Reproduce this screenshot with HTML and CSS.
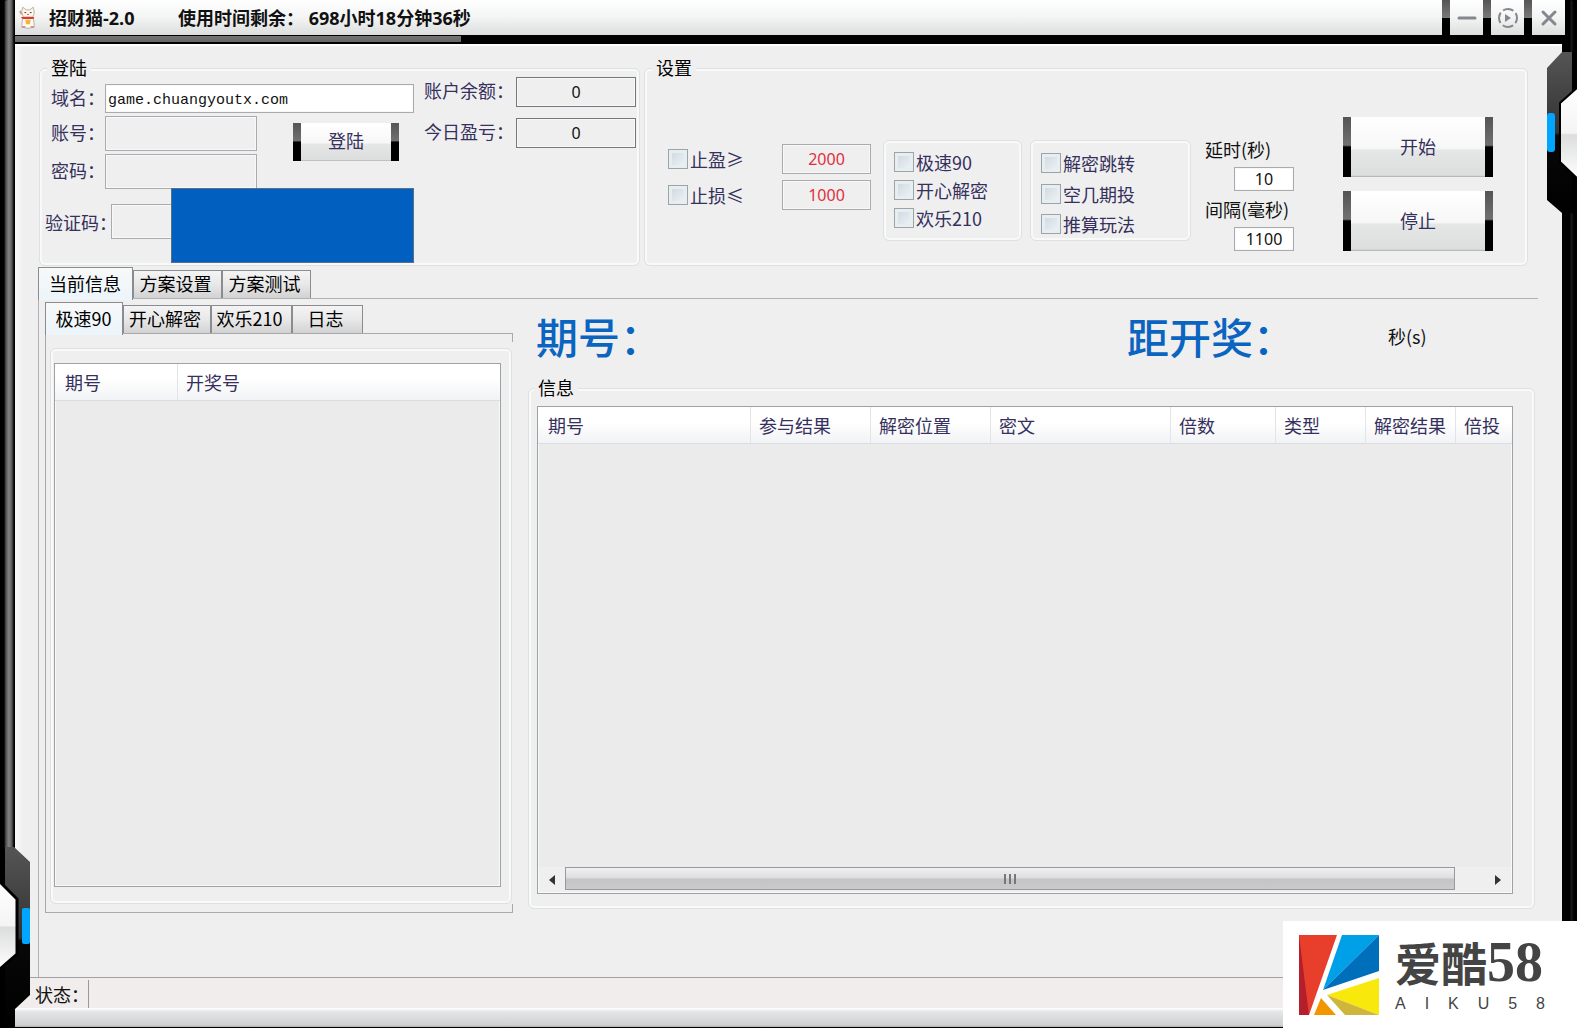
FILE: index.html
```html
<!DOCTYPE html>
<html lang="zh-CN">
<head>
<meta charset="utf-8">
<title>招财猫-2.0</title>
<link rel="stylesheet" href="styles.css">
</head>
<body>
<div class="window">
  <header class="titlebar">
    <div class="caption">
      <svg class="cat" viewBox="0 0 20 26" aria-hidden="true">
        <path d="M3 7 L4 1 L8 4 H12 L16 1 L17 8 L15 12 H5 Z" fill="#fdf6ea" stroke="#b5ada0"/>
        <path d="M4 13 Q10 11 16 13 L17 22 Q10 27 3 22 Z" fill="#fff8ef" stroke="#b5ada0"/>
        <path d="M2 12 H17 L16 14 H4 Z" fill="#e0382c"/>
        <path d="M7 15 H13 L12 20 H8 Z" fill="#f0b43c"/>
        <path d="M6 7 H8 M12 7 H14" stroke="#333"/>
        <path d="M9 9 H11" stroke="#e0382c"/>
        <path d="M1 5 L3 9 M3 23 H7 M13 23 H17" stroke="#c98" stroke-width="2"/>
      </svg>
      <h1 class="title">招财猫-2.0</h1>
      <p class="remaining">使用时间剩余： 698小时18分钟36秒</p>
    </div>
    <button class="sysbtn" aria-label="最小化"><svg viewBox="0 0 22 22"><path d="M3 11 H19" stroke="#85868f" stroke-width="3" stroke-linecap="round"/></svg></button>
    <button class="sysbtn" aria-label="换肤"><svg viewBox="0 0 22 22"><circle cx="11" cy="11" r="9" fill="none" stroke="#85868f" stroke-width="2" stroke-dasharray="11 3.137" stroke-dashoffset="5.5"/><path d="M8 7 L14 11 L8 15 Z" fill="#85868f"/></svg></button>
    <button class="sysbtn" aria-label="关闭"><svg viewBox="0 0 22 22"><path d="M5 5 L17 17 M17 5 L5 17" stroke="#85868f" stroke-width="3" stroke-linecap="round"/></svg></button>
  </header>
  <div class="rail"></div>

  <main class="content">
    <div class="top">
      <fieldset class="group login">
        <legend>登陆</legend>
        <div class="login-body">
          <div class="login-form">
            <label for="domain">域名：</label>
            <input id="domain" class="box domain" type="text" value="game.chuangyoutx.com">
            <label for="account">账号：</label>
            <input id="account" class="box" type="text">
            <button class="metal login-btn">登陆</button>
            <label for="password">密码：</label>
            <input id="password" class="box" type="password">
            <div class="captcha-row">
              <label for="captcha">验证码：</label>
              <input id="captcha" class="box" type="text">
            </div>
            <div class="captcha-image"></div>
          </div>
          <div class="balance">
            <label for="bal">账户余额：</label><output id="bal" class="box figure">0</output>
            <label for="profit">今日盈亏：</label><output id="profit" class="box figure">0</output>
          </div>
        </div>
      </fieldset>

      <fieldset class="group settings">
        <legend>设置</legend>
        <div class="settings-body">
          <div class="limits">
            <label class="check"><input type="checkbox">止盈≥</label>
            <input class="box limit" type="text" value="2000" aria-label="止盈">
            <label class="check"><input type="checkbox">止损≤</label>
            <input class="box limit" type="text" value="1000" aria-label="止损">
          </div>
          <div class="group games">
            <label class="check"><input type="checkbox">极速90</label>
            <label class="check"><input type="checkbox">开心解密</label>
            <label class="check"><input type="checkbox">欢乐210</label>
          </div>
          <div class="group modes">
            <label class="check"><input type="checkbox">解密跳转</label>
            <label class="check"><input type="checkbox">空几期投</label>
            <label class="check"><input type="checkbox">推算玩法</label>
          </div>
          <div class="timing">
            <label for="delay">延时(秒)</label>
            <input id="delay" class="box time" type="text" value="10">
            <label for="interval">间隔(毫秒)</label>
            <input id="interval" class="box time" type="text" value="1100">
          </div>
          <div class="actions">
            <button class="metal">开始</button>
            <button class="metal">停止</button>
          </div>
        </div>
      </fieldset>
    </div>

    <div class="tabs main-tabs" role="tablist">
      <button class="tab active" role="tab" aria-selected="true">当前信息</button>
      <button class="tab" role="tab">方案设置</button>
      <button class="tab" role="tab">方案测试</button>
    </div>
    <div class="page">
      <section class="history">
        <div class="tabs sub-tabs" role="tablist">
          <button class="tab active" role="tab" aria-selected="true">极速90</button>
          <button class="tab" role="tab">开心解密</button>
          <button class="tab" role="tab">欢乐210</button>
          <button class="tab" role="tab">日志</button>
        </div>
        <div class="history-pane">
          <div class="group history-group">
            <div class="list">
              <table>
                <colgroup><col class="w-issue"><col></colgroup>
                <thead><tr><th>期号</th><th>开奖号</th></tr></thead>
              </table>
            </div>
          </div>
        </div>
      </section>

      <section class="details">
        <div class="draw">
          <h2>期号：</h2>
          <h2 class="countdown">距开奖：</h2>
          <span class="seconds">秒(s)</span>
        </div>
        <fieldset class="group info">
          <legend>信息</legend>
          <div class="list">
            <table>
              <colgroup><col class="c210"><col class="c120"><col class="c120"><col class="c180"><col class="c105"><col class="c90"><col class="c90"><col></colgroup>
              <thead><tr><th>期号</th><th>参与结果</th><th>解密位置</th><th>密文</th><th>倍数</th><th>类型</th><th>解密结果</th><th>倍投</th></tr></thead>
            </table>
            <div class="scrollbar">
              <button class="arrow" aria-label="向左滚动"><svg viewBox="0 0 8 12"><path d="M7 1 V11 L1 6 Z" fill="#333"/></svg></button>
              <div class="track"><div class="thumb"><i></i><i></i><i></i></div></div>
              <button class="arrow" aria-label="向右滚动"><svg viewBox="0 0 8 12"><path d="M1 1 V11 L7 6 Z" fill="#333"/></svg></button>
            </div>
          </div>
        </fieldset>
      </section>
    </div>

    <footer class="status"><span class="status-label">状态：</span></footer>
    <div class="sill"></div>
  </main>

  <svg class="clasp clasp-right" viewBox="0 0 30 162" aria-hidden="true">
    <defs>
      <linearGradient id="steel" x1="0" y1="0" x2="0" y2="1"><stop offset="0" stop-color="#555"/><stop offset=".5" stop-color="#333"/><stop offset=".52" stop-color="#080808"/><stop offset="1" stop-color="#000"/></linearGradient>
      <linearGradient id="pearl" x1="0" y1="0" x2="0" y2="1"><stop offset="0" stop-color="#fff"/><stop offset=".5" stop-color="#f4f4f4"/><stop offset=".52" stop-color="#dcdddd"/><stop offset="1" stop-color="#fff"/></linearGradient>
    </defs>
    <path d="M15 0 L0 16 V148 L15 161 H30 V0 Z" fill="url(#steel)"/>
    <path d="M25 0 H30 V162 H25 Z" fill="#000"/>
    <path d="M31 35 L13 51 V110 L31 127" fill="url(#pearl)" stroke="#000" stroke-width="2"/>
    <rect x="0" y="61" width="8" height="39" rx="3" fill="#00a5ff"/>
  </svg>
  <svg class="clasp clasp-left" viewBox="0 0 30 181" aria-hidden="true">
    <path d="M0 0 H14 L30 15 V148 L15 162 V181 H0 Z" fill="url(#steel)"/>
    <path d="M0 0 H5 V181 H0 Z" fill="#000"/>
    <path d="M-1 34 L17 52 V107 L-1 123" fill="url(#pearl)" stroke="#000" stroke-width="3"/>
    <rect x="22" y="61" width="8" height="36" rx="2" fill="#00a5ff"/>
  </svg>

  <aside class="brand">
    <svg class="brand-mark" viewBox="0 0 80 80" aria-hidden="true">
      <path d="M0 0 H38 L10 80 H0 Z" fill="#e83f2c"/>
      <path d="M0 0 L10 80 H0 Z" fill="#b3202c"/>
      <path d="M43 0 H80 L24 55 Z" fill="#00a0e9"/>
      <path d="M80 0 V36 L24 55 Z" fill="#006fbb"/>
      <path d="M80 43 V80 L28 60 Z" fill="#f8e80c"/>
      <path d="M28 60 L80 80 H46 Z" fill="#cfb53b"/>
      <path d="M22 63 L37 80 H15 Z" fill="#f29600"/>
    </svg>
    <div class="brand-text">
      <strong class="brand-name">爱酷<span class="brand-number">58</span></strong>
      <span class="brand-latin"><span>A</span><span>I</span><span>K</span><span>U</span><span>5</span><span>8</span></span>
    </div>
  </aside>
</div>
</body>
</html>
```
FILE: styles.css
```css
* { box-sizing: border-box; }

body {
  margin: 0;
  background: #000;
  color: #111;
  font: 18px/18px "Noto Sans CJK SC", sans-serif;
}

button, input, output { font: inherit; color: inherit; margin: 0; }
h1, h2, p { margin: 0; }

.window {
  position: relative;
  display: flex;
  flex-direction: column;
  min-height: 100vh;
  padding: 0 15px 1px;
  border-radius: 8px 8px 0 0;
  background:
    linear-gradient(90deg, #000 4px, #555 6px, #858585 9px, #555 12px, #000 14px) left / 15px 100% no-repeat,
    linear-gradient(90deg, #000 8px, #1c1c1c 9px, #000 12px) right / 15px 100% no-repeat,
    #000;
}

/* title bar */
.titlebar {
  display: flex;
  gap: 8px;
  height: 35px;
  margin-right: -3px;
  background: linear-gradient(#555, #777 50%, #000 52%) right / 125px 100% no-repeat;
}
.caption {
  flex: 1;
  display: flex;
  align-items: center;
  padding-left: 4px;
  background: linear-gradient(#fff, #f3f4f4 50%, #dcdede);
  font-family: "Open Sans", "Noto Sans CJK SC", sans-serif;
  font-weight: 700;
}
.cat { width: 18px; height: 26px; }
.title { width: 129px; margin-left: 12px; font-size: 18px; line-height: 24px; }
.remaining { line-height: 24px; white-space: pre; }
.sysbtn {
  width: 33px;
  padding: 0;
  border: 0;
  background: linear-gradient(#fff, #f3f4f4 50%, #dcdede);
}
.sysbtn svg { display: block; width: 22px; height: 22px; margin: 0 auto; }
.rail { height: 9px; background: linear-gradient(#757575, #666) 0 1px / 446px 6px no-repeat #000; }

/* client area */
.content {
  flex: 1;
  display: flex;
  flex-direction: column;
  padding-top: 15px;
  background: #efefef;
  box-shadow: inset 0 2px 0 #fff, inset 4px 0 5px #fafafa;
}
.top { display: flex; gap: 4px; height: 207px; margin: 0 34px 0 24px; }

.group {
  min-width: 0;
  margin: 0;
  padding: 0;
  border: 1px solid #dde1e4;
  border-radius: 6px;
  box-shadow: inset 0 0 0 2px #f8fafa;
}
legend { margin-left: 7px; padding: 0 4px 2px; background: #efefef; color: #000; line-height: 16px; }

.box {
  min-width: 0;
  padding: 0 2px;
  border: 1px solid #a9abb0;
  border-radius: 0;
  background: #efefef;
  box-shadow: inset 0 0 0 1px #f8f8f8;
}

/* login */
.login { width: 601px; }
.login-body { display: flex; gap: 10px; color: #35305c; }
.login-form {
  position: relative;
  display: grid;
  grid-template-columns: 60px 152px 1fr;
  grid-template-rows: 29px 35px 35px 35px;
  row-gap: 3px;
  align-items: center;
  width: 374px;
  padding: 7px 0 0 5px;
}
.login-form label { padding: 0 0 4px 6px; white-space: nowrap; }
.login-form .box { height: 100%; }
.login-form .domain {
  grid-column: 2 / 4;
  padding-top: 3px;
  background: #fff;
  color: #111;
  font: 15px/18px "Liberation Mono", monospace;
}
.login-btn { grid-column: 3; grid-row: 2 / 4; width: 106px; height: 38px; margin: 0 0 22px 36px; }
.captcha-row { grid-column: 1 / 3; display: flex; align-items: center; height: 100%; margin-top: 24px; }
.captcha-row label { width: 66px; padding: 0; white-space: nowrap; }
.captcha-row .box { width: 80px; }
.captcha-image {
  position: absolute;
  right: 0;
  top: 111px;
  width: 243px;
  height: 75px;
  border: 1px solid #56708c;
  background: #005fbf;
}
.balance {
  display: grid;
  grid-template-columns: 92px 120px;
  grid-auto-rows: 30px;
  gap: 11px 0;
  align-content: start;
  align-items: center;
  white-space: nowrap;
}
.balance label { padding-bottom: 4px; }
.figure {
  height: 30px;
  border-color: #76777a;
  color: #111;
  font: 16px/28px "Noto Sans", sans-serif;
  text-align: center;
}

/* settings */
.settings { flex: 1; }
.settings-body { display: flex; height: 186px; padding: 40px 34px 0 23px; color: #35305c; }
.limits {
  display: grid;
  grid-template-columns: 114px 89px;
  grid-auto-rows: 30px;
  row-gap: 6px;
  align-items: center;
  align-content: start;
  padding-top: 27px;
}
.limit { height: 30px; color: #e03040; font: 16px/18px "Noto Sans", sans-serif; text-align: center; }
.check { display: flex; align-items: center; gap: 2px; white-space: nowrap; }
.check input {
  appearance: none;
  width: 20px;
  height: 20px;
  border: 1px solid #9aa5aa;
  background: linear-gradient(135deg, #c9d6de, #f2f6f9);
  box-shadow: inset 0 0 0 3px #e8edef;
}
.games, .modes {
  display: flex;
  flex-direction: column;
  justify-content: space-between;
  height: 101px;
  margin-top: 23px;
}
.games { width: 139px; margin-left: 12px; padding: 11px 0 12px 10px; }
.modes { width: 161px; margin-left: 8px; padding: 12px 0 6px 10px; }
.timing {
  display: flex;
  flex-direction: column;
  width: 104px;
  margin-left: 14px;
  padding-top: 23px;
  color: #111;
  white-space: nowrap;
}
.time {
  width: 60px;
  height: 24px;
  margin: 9px 0 9px 29px;
  background: #fff;
  font: 16px/18px "Noto Sans", sans-serif;
  text-align: center;
}
.actions { display: grid; grid-auto-rows: 60px; gap: 14px; width: 150px; margin-left: auto; }

.metal {
  padding: 0 0 3px;
  border: 0;
  color: #35305c;
  background:
    linear-gradient(#555, #707070 47%, #000 50%) left / 8px 100% no-repeat,
    linear-gradient(#555, #707070 47%, #000 50%) right / 8px 100% no-repeat,
    linear-gradient(#fff, #f7f7f7 52%, #e5e6e6 56%, #dcdede 97%, #aaa);
}

/* tabs */
.tabs { display: flex; align-items: flex-end; height: 31px; }
.tab {
  width: 89px;
  height: 28px;
  padding: 0 4px 3px 0;
  border: 1px solid #8b8c90;
  border-bottom: 0;
  background: linear-gradient(#f4f4f4, #e8e8e8 50%, #d2d2d2);
  color: #000;
  white-space: nowrap;
}
.tab.active {
  position: relative;
  height: 33px;
  margin-bottom: -2px;
  padding-right: 1px;
  background: linear-gradient(#f8f8f8, #ebf5fb);
}
.main-tabs { margin: 1px 24px 0 23px; }
.main-tabs .active { width: 95px; }
.sub-tabs .active { width: 78px; }
.sub-tabs .tab:nth-child(2) { width: 88px; }
.sub-tabs .tab:nth-child(3) { width: 81px; }
.sub-tabs .tab:nth-child(4) { width: 71px; }

.page {
  flex: 1;
  display: flex;
  gap: 15px;
  margin: 0 24px 0 23px;
  padding: 3px 3px 64px 6px;
  border: solid #b0b1b3;
  border-width: 1px 0 0 1px;
}
.history { display: flex; flex-direction: column; width: 468px; }
.history-pane {
  flex: 1;
  display: flex;
  padding: 14px 1px 8px 4px;
  border: solid #a8a9ac;
  border-width: 1px 0 1px 1px;
  background:
    linear-gradient(#a8a9ac, #a8a9ac) right top / 1px 8px no-repeat,
    linear-gradient(#a8a9ac, #a8a9ac) right bottom / 1px 8px no-repeat;
}
.history-group { flex: 1; display: flex; padding: 14px 10px 16px 3px; }

.list {
  flex: 1;
  display: flex;
  flex-direction: column;
  border: 1px solid #9fa1a5;
  background: #ebebeb;
  box-shadow: inset 0 0 0 1px #f9f9f9;
}
table { width: 100%; table-layout: fixed; border-collapse: separate; border-spacing: 0; }
th {
  height: 37px;
  padding: 0 0 0 8px;
  border-bottom: 1px solid #dcdde0;
  border-right: 1px solid #e2e4e8;
  background: linear-gradient(#fff 40%, #f2f3f6);
  color: #35305c;
  font-weight: 400;
  text-align: left;
  white-space: nowrap;
}
th:first-child { padding-left: 10px; }
th:last-child { border-right: 0; }
.w-issue { width: 123px; }
.c210 { width: 213px; }
.c120 { width: 120px; }
.c180 { width: 180px; }
.c105 { width: 105px; }
.c90 { width: 90px; }

.details { flex: 1; display: flex; flex-direction: column; min-width: 0; }
.draw { display: flex; align-items: center; height: 77px; padding: 0 101px 10px 8px; }
.draw h2 { color: #0a64c0; font-size: 42px; line-height: 48px; font-weight: 500; white-space: nowrap; }
.countdown { margin-left: auto; }
.seconds { width: 46px; margin-left: 93px; white-space: nowrap; }
.info { flex: 1; display: flex; flex-direction: column; margin-bottom: 4px; padding: 9px 21px 14px 8px; }
.info legend { margin-left: -3px; }

.scrollbar { display: flex; height: 25px; margin: auto 1px 1px; background: #efefef; }
.arrow { display: flex; align-items: center; justify-content: center; width: 26px; padding: 0; border: 0; background: none; }
.arrow svg { width: 8px; height: 12px; }
.track { flex: 1; padding-right: 30px; }
.thumb {
  display: flex;
  align-items: center;
  justify-content: center;
  gap: 3px;
  height: 23px;
  border: 1px solid #98999b;
  background: linear-gradient(#f1f1f2, #dedee0 45%, #c4c4c6 55%, #cacacc);
}
.thumb i { width: 2px; height: 10px; background: #777; }

.status { display: flex; height: 31px; padding: 2px 0 0 20px; border-top: 1px solid #a2a2a2; background: #f0edec; }
.status-label { width: 54px; border-right: 1px solid #999; line-height: 28px; white-space: nowrap; }
.sill { height: 19px; background: linear-gradient(#fff, #e3e6e7 20%, #cfd2d2 90%, #aaa); }

/* frame ornaments */
.clasp { position: absolute; width: 30px; }
.clasp-right { right: 0; top: 52px; height: 162px; }
.clasp-left { left: 0; bottom: 0; height: 181px; }

/* corner brand */
.brand {
  position: absolute;
  right: 0;
  bottom: 0;
  display: flex;
  gap: 16px;
  width: 294px;
  height: 107px;
  padding: 14px 16px;
  background: #fff;
}
.brand-mark { width: 80px; height: 80px; }
.brand-text { display: flex; flex-direction: column; width: 152px; color: #444; }
.brand-name { height: 60px; font: 700 46px/52px "Noto Sans CJK SC", sans-serif; white-space: nowrap; }
.brand-number { font: 700 56px/52px "Liberation Serif", serif; }
.brand-latin {
  display: flex;
  justify-content: space-between;
  width: 150px;
  font: 16px/20px "Liberation Sans", sans-serif;
}
```
